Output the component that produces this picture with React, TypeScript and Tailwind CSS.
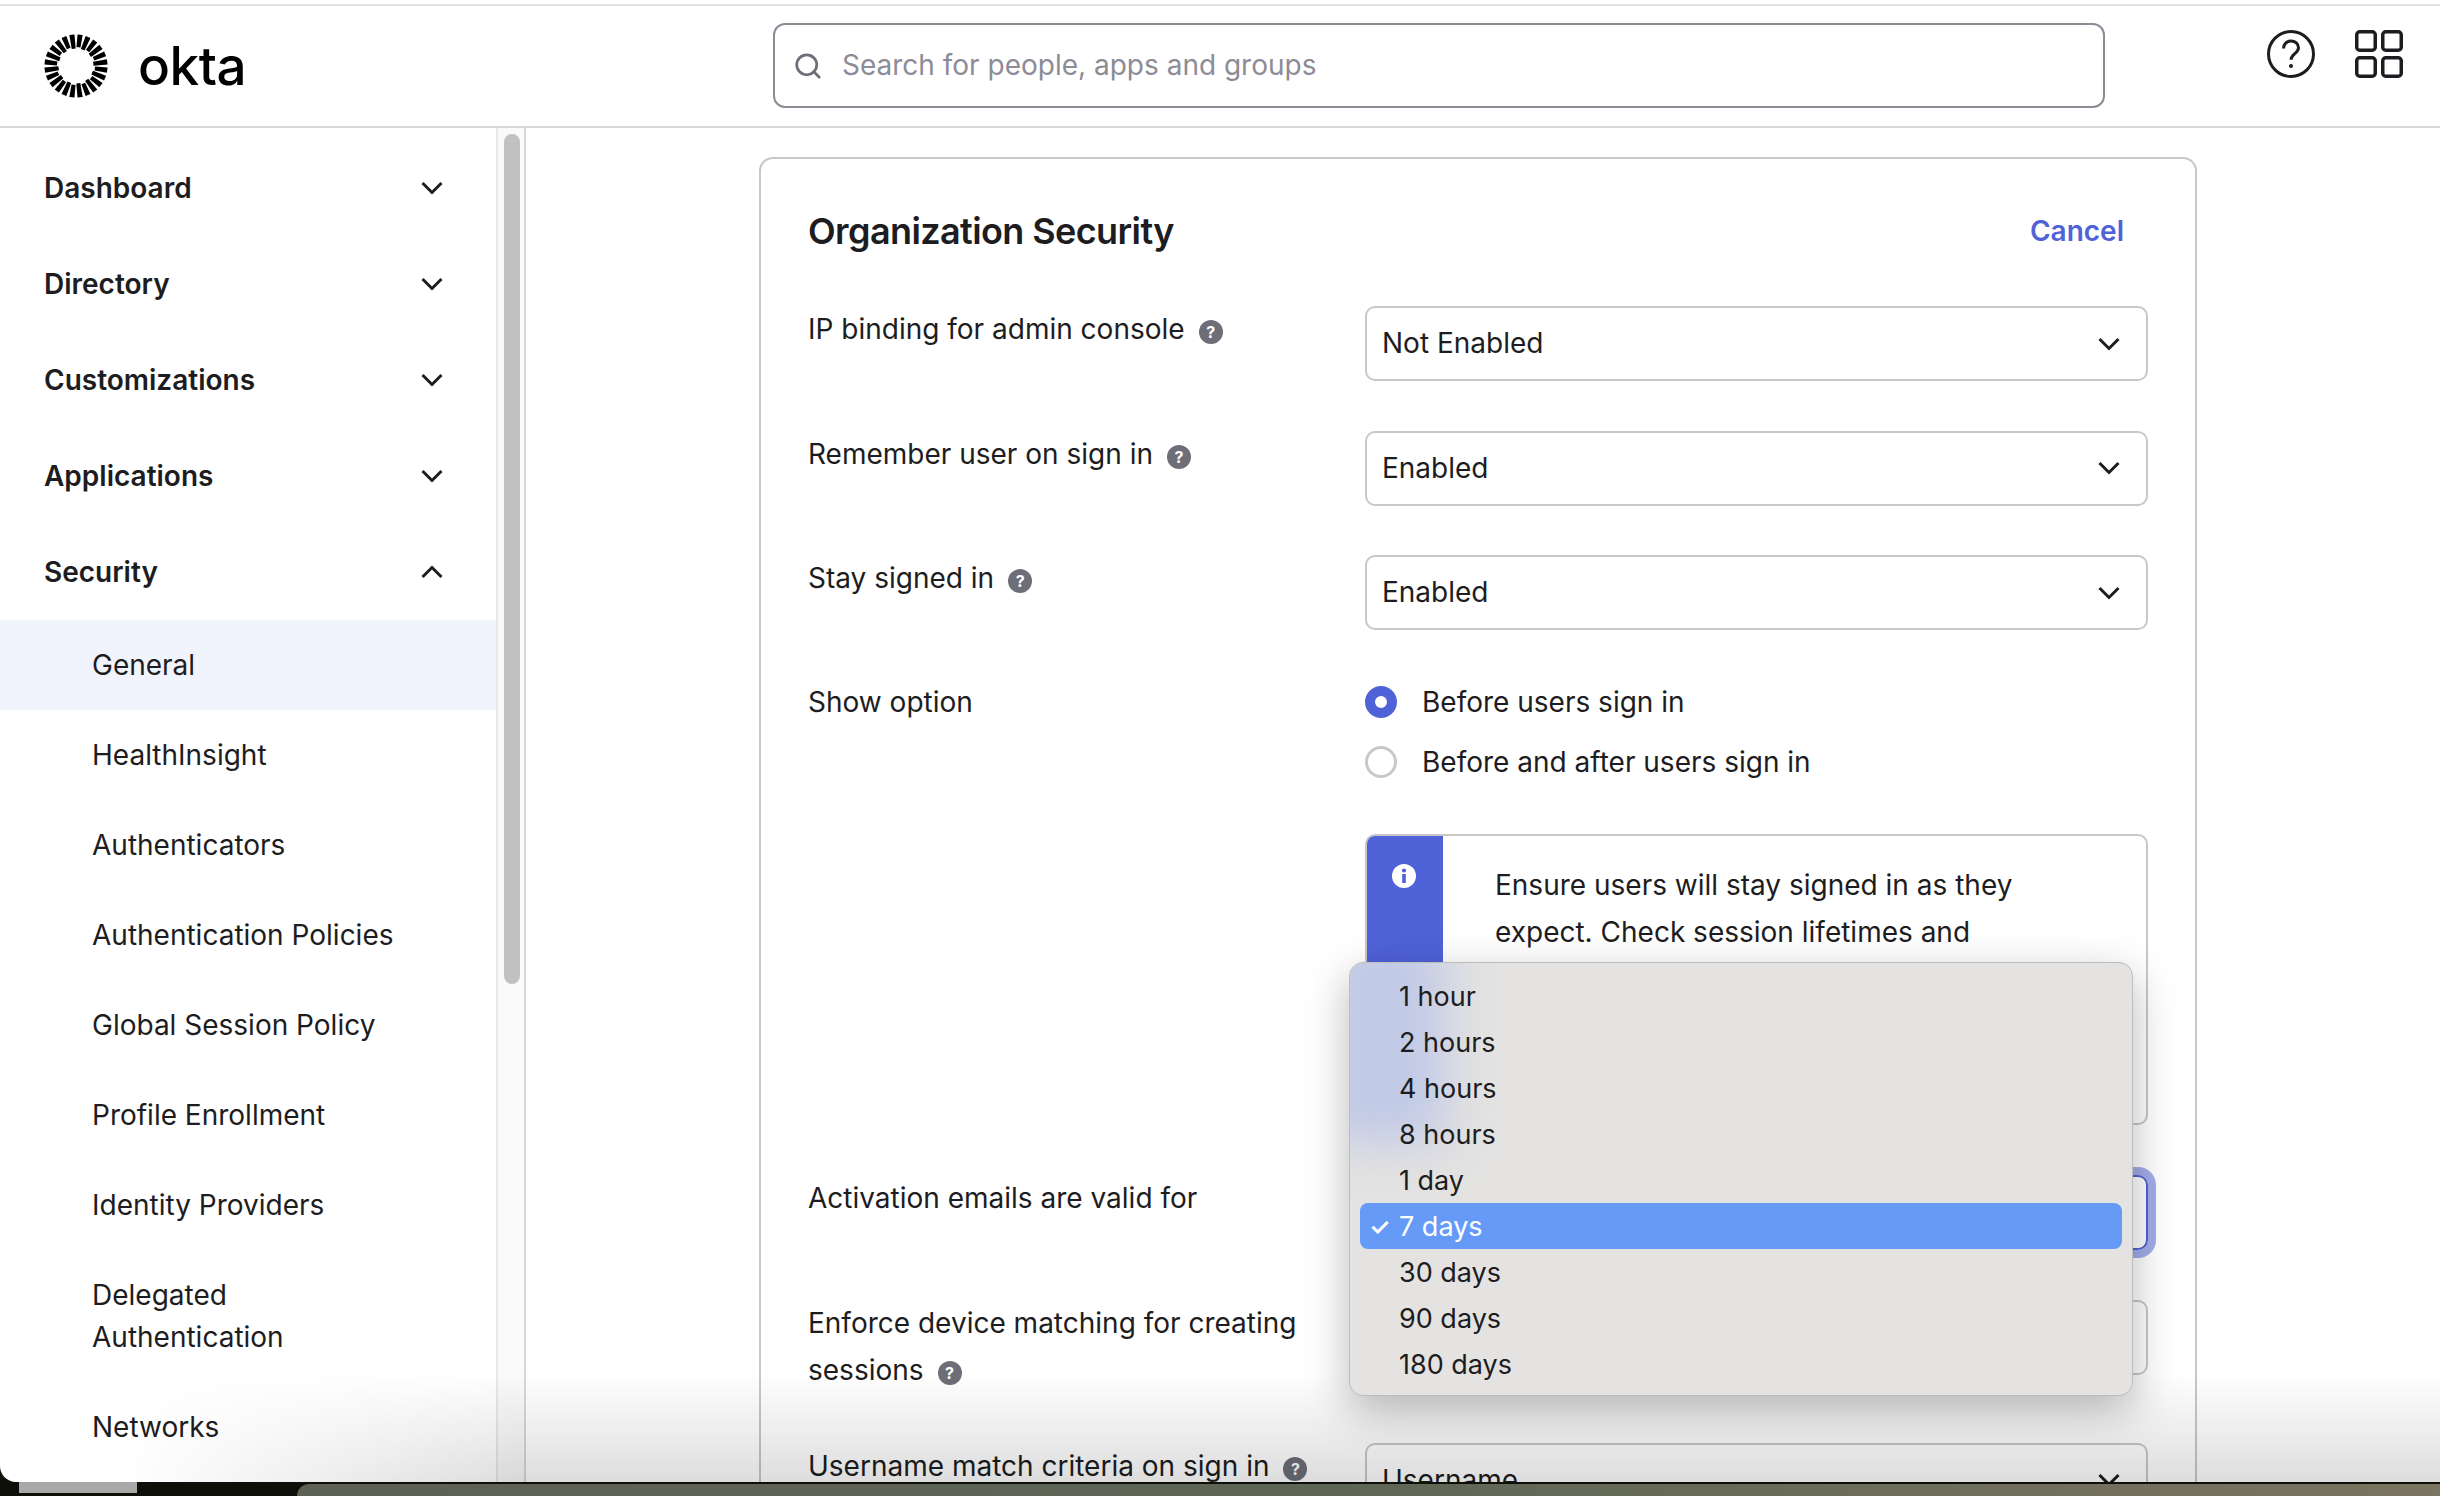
import { Search } from "lucide-react";

const topNav = ["Dashboard", "Directory", "Customizations", "Applications"];
const subNav = ["HealthInsight", "Authenticators", "Authentication Policies", "Global Session Policy", "Profile Enrollment", "Identity Providers"];
const durations = ["1 hour", "2 hours", "4 hours", "8 hours", "1 day", "7 days", "30 days", "90 days", "180 days"];

function Chevron({ up = false }: { up?: boolean }) {
    return (
        <svg width="24" height="14" viewBox="0 0 24 14" fill="none" stroke="#1d1d21" strokeWidth="3">
            <path d={up ? "M2.5 12L12 2.5L21.5 12" : "M2.5 2L12 11.5L21.5 2"} />
        </svg>
    );
}

function OktaLogo() {
    // sunburst, rays are a bit uneven like the real mark
    const rays = Array.from({ length: 24 }, (_, i) => (i * 360) / 24 + 7.5);
    return (
        <svg width="64" height="64" viewBox="-32 -32 64 64" className="flex-none">
            {rays.map((a, i) => (
                <path key={a} d={`M-2 ${i % 2 ? -17.5 : -19}L-2.6 -31.5L2.6 -31.5L2 ${i % 2 ? -17.5 : -19}Z`} transform={`rotate(${a})`} fill="#000" />
            ))}
        </svg>
    );
}

function HelpDot() {
    return (
        <span className="inline-flex w-[24px] h-[24px] rounded-full bg-[#6e6e78] text-white text-[16px] font-bold leading-none items-center justify-center ml-[14px] align-[1px]">?</span>
    );
}

function Select({ value, focused = false }: { value: string; focused?: boolean }) {
    return (
        <div className={`flex-1 h-[75px] rounded-[10px] border-2 flex items-center justify-between pl-[15px] pr-[25px] ${focused ? "border-[#4f62d8] shadow-[0_0_0_8px_#a3ade9]" : "border-[#c8c8c8]"}`}>
            <span>{value}</span>
            <Chevron />
        </div>
    );
}

function Radio({ label, checked = false }: { label: string; checked?: boolean }) {
    return (
        <div className="flex items-center h-[48px] mb-[12px]">
            {checked ? (
                <span className="w-[32px] h-[32px] rounded-full border-[10px] border-[#4f62d8] bg-white" />
            ) : (
                <span className="w-[32px] h-[32px] rounded-full border-[3px] border-[#c8c8c8] bg-white" />
            )}
            <span className="ml-[25px]">{label}</span>
        </div>
    );
}

export default function App() {
    return (
        <div className="relative w-[2440px] h-[1496px] overflow-hidden bg-[#0f0f0a] text-[#1d1d21] text-[28px] leading-[47px] [font-family:Inter,'Noto_Sans',sans-serif]">

            {/* browser window */}

            <div className="relative h-[1482px] bg-white rounded-bl-[16px] overflow-hidden flex flex-col">
                <div className="h-[4px] flex-none"></div>
                <div className="h-[2px] flex-none bg-[#e1e1e1]"></div>

                <header className="h-[122px] flex-none border-b-2 border-[#d7d7dc] flex items-start pl-[44px]">
                    <div className="w-[729px] flex items-center pt-[28px]">
                        <OktaLogo />
                        <span className="ml-[30px] text-[53px] leading-[64px] font-medium text-black tracking-[-0.5px]">okta</span>
                    </div>
                    <div className="w-[1332px] h-[85px] mt-[17px] border-2 border-[#8c8c96] rounded-[12px] flex items-center pl-[18px]">
                        <Search size={30} color="#6e6e78" strokeWidth={2.2} />
                        <span className="ml-[19px] text-[#8c8c96]">Search for people, apps and groups</span>
                    </div>
                    <div className="ml-[162px] mt-[24px] flex gap-[40px]">
                        <svg width="48" height="48" viewBox="0 0 48 48" fill="none" stroke="#1d1d21" strokeWidth="3">
                            <circle cx="24" cy="24" r="22.5" />
                            <path d="M16.5 18.5c0-4.4 3.3-7.5 7.5-7.5s7.5 2.9 7.5 6.8c0 5.6-7.5 6-7.5 12" />
                            <circle cx="24" cy="36" r="2" fill="#1d1d21" stroke="none" />
                        </svg>
                        <svg width="48" height="48" viewBox="0 0 48 48" fill="none" stroke="#1d1d21" strokeWidth="3.5">
                            <rect x="1.75" y="1.75" width="18.5" height="18.5" rx="3" />
                            <rect x="27.75" y="1.75" width="18.5" height="18.5" rx="3" />
                            <rect x="1.75" y="27.75" width="18.5" height="18.5" rx="3" />
                            <rect x="27.75" y="27.75" width="18.5" height="18.5" rx="3" />
                        </svg>
                    </div>
                </header>

                <div className="flex flex-1 min-h-0 overflow-hidden">

                    {/* side nav */}

                    <nav className="w-[498px] flex-none border-r-2 border-[#e8e8e8] pt-[12px]">
                        {topNav.map((name) => (
                            <div key={name} className="h-[96px] flex items-center justify-between pl-[44px] pr-[52px] font-semibold">
                                <span>{name}</span>
                                <Chevron />
                            </div>
                        ))}
                        <div className="h-[96px] flex items-center justify-between pl-[44px] pr-[52px] font-semibold">
                            <span>Security</span>
                            <Chevron up />
                        </div>
                        <div className="h-[90px] flex items-center pl-[92px] bg-[#f2f4fd]">General</div>
                        {subNav.map((name) => (
                            <div key={name} className="h-[90px] flex items-center pl-[92px]">{name}</div>
                        ))}
                        <div className="h-[132px] flex items-center pl-[92px] leading-[42px]">Delegated<br />Authentication</div>
                        <div className="h-[90px] flex items-center pl-[92px]">Networks</div>
                    </nav>

                    <div className="w-[28px] flex-none bg-[#fafafa] border-r-2 border-[#d7d7dc] pl-[6px] pt-[6px]">
                        <div className="w-[16px] h-[850px] rounded-full bg-[#c1c1c1]"></div>
                    </div>

                    {/* main card */}

                    <main className="flex-1 pl-[233px] pt-[29px]">
                        <div className="w-[1438px] border-2 border-[#c8c8c8] rounded-t-[14px] px-[47px] pt-[47px]">
                            <div className="flex items-center justify-between h-[50px] mb-[50px] pr-[24px]">
                                <h2 className="text-[36px] font-semibold tracking-[-0.6px]">Organization Security</h2>
                                <a className="font-semibold text-[#4f62d8]">Cancel</a>
                            </div>

                            <div className="flex mb-[49.5px]">
                                <div className="w-[557px]">IP binding for admin console<HelpDot /></div>
                                <Select value="Not Enabled" />
                            </div>
                            <div className="flex mb-[49.5px]">
                                <div className="w-[557px]">Remember user on sign in<HelpDot /></div>
                                <Select value="Enabled" />
                            </div>
                            <div className="flex mb-[48px]">
                                <div className="w-[557px]">Stay signed in<HelpDot /></div>
                                <Select value="Enabled" />
                            </div>

                            <div className="flex mb-[50px]">
                                <div className="w-[557px] pt-[1px]">Show option</div>
                                <div className="flex-1">
                                    <Radio label="Before users sign in" checked />
                                    <Radio label="Before and after users sign in" />
                                    <div className="mt-[48px] h-[291px] border-2 border-[#c8c8c8] rounded-[10px] flex overflow-hidden">
                                        <div className="w-[78px] flex-none bg-[#4f62d8] flex justify-center pt-[30px] -ml-[2px] -mt-[2px]">
                                            <svg width="24" height="24" viewBox="0 0 24 24">
                                                <circle cx="12" cy="12" r="12" fill="#fff" />
                                                <rect x="10.2" y="10" width="3.6" height="9" fill="#4f62d8" />
                                                <circle cx="12" cy="6.5" r="2.1" fill="#4f62d8" />
                                            </svg>
                                        </div>
                                        <div className="pl-[52px] pr-[90px] pt-[26px]">
                                            Ensure users will stay signed in as they expect. Check session lifetimes and global session policies.
                                        </div>
                                    </div>
                                </div>
                            </div>

                            <div className="flex mb-[49.5px]">
                                <div className="w-[557px]">Activation emails are valid for</div>
                                <Select value="7 days" focused />
                            </div>
                            <div className="flex mb-[49px]">
                                <div className="w-[557px] pr-[50px]">Enforce device matching for creating sessions<HelpDot /></div>
                                <Select value="Not Enabled" />
                            </div>
                            <div className="flex">
                                <div className="w-[557px]">Username match criteria on sign in<HelpDot /></div>
                                <Select value="Username" />
                            </div>
                        </div>
                    </main>
                </div>

                {/* shadow from the window below */}

                <div className="absolute left-0 right-0 bottom-0 h-[110px] pointer-events-none bg-gradient-to-t from-[#00000022] to-transparent [mask-image:linear-gradient(to_right,transparent_120px,black_520px)]"></div>

                {/* native select menu */}

                <div className="absolute left-[1349px] top-[962px] w-[784px] h-[434px] rounded-[14px] border border-[#bdbdbd] bg-[#e4e3e2] shadow-[0_14px_44px_rgba(0,0,0,0.28)] overflow-hidden pt-[10px] text-[27px]">
                    <div className="absolute -left-[30px] -top-[30px] w-[125px] h-[210px] bg-[#c0c9e6] blur-[24px]"></div>
                    {durations.map((d) => (
                        <div key={d} className={`relative h-[46px] mx-[10px] pl-[39px] flex items-center rounded-[8px] ${d === "7 days" ? "bg-[#659bf7] text-white" : ""}`}>
                            {d === "7 days" && <span className="absolute left-[9px] text-[24px] font-semibold">✓</span>}
                            {d}
                        </div>
                    ))}
                </div>
            </div>

            {/* desktop wallpaper under the window */}

            <div className="relative h-[14px]">
                <div className="absolute left-[19px] top-0 w-[118px] h-[11px] bg-[#a8a8a8]"></div>
                <div className="absolute left-[297px] right-0 top-[2px] h-[12px] rounded-tl-[20px] bg-gradient-to-r from-[#5d6154] via-[#5f6656] to-[#7a7460]"></div>
            </div>
        </div>
    );
}
